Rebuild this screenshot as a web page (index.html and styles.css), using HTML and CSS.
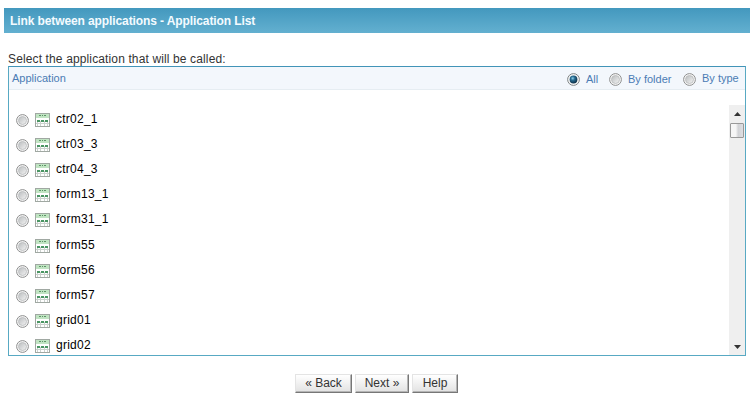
FILE: index.html
```
<!DOCTYPE html>
<html lang="en">
<head>
<meta charset="utf-8">
<title>Link between applications</title>
<link rel="stylesheet" href="styles.css">
</head>
<body>
<svg class="defs" width="0" height="0">
  <defs>
    <linearGradient id="knob" x1="0" y1="0" x2="1" y2="1"><stop offset="0" stop-color="#b9bcbe"/><stop offset="1" stop-color="#f4f4f4"/></linearGradient>
    <radialGradient id="dot" cx=".4" cy=".35" r=".65"><stop offset="0" stop-color="#8fd0ea"/><stop offset=".4" stop-color="#276c92"/><stop offset="1" stop-color="#0d3048"/></radialGradient>
    <linearGradient id="thumb"><stop offset="0" stop-color="#f6f6f6"/><stop offset="1" stop-color="#cfd0d3"/></linearGradient>
    <symbol id="radio" viewBox="0 0 13 13">
      <circle cx="6.5" cy="6.5" r="5.9" fill="#f6f6f6" stroke="#8e8f8f"/>
      <circle cx="6.5" cy="6.5" r="4" fill="url(#knob)" stroke="#b9bbbc" stroke-width=".8"/>
    </symbol>
    <symbol id="radio-on" viewBox="0 0 13 13">
      <circle cx="6.5" cy="6.5" r="5.9" fill="#f6f6f6" stroke="#7f8586"/>
      <circle cx="6.5" cy="6.5" r="3.9" fill="url(#dot)"/>
    </symbol>
    <symbol id="table" viewBox="0 0 15 14">
      <rect x=".5" y=".5" width="14" height="13" fill="#fff" stroke="#a0a8a2"/>
      <path d="M1 1h13v4H1z" fill="#c0e4c2"/>
      <path d="M4 2.500h2M7 2.500h1M9 2.500h2" stroke="#5e9468"/>
      <path d="M1 10.500h13M5.500 8v5M9.500 8v5M2.500 8v5M12.500 8v5" stroke="#ccd2ce"/>
      <path d="M2 7h3v2H2zM6 7h3v2H6zM10 7h3v2h-3z" fill="#4a9663"/>
    </symbol>
  </defs>
</svg>
<header class="title">Link between applications - Application List</header>
<main>
  <p class="prompt">Select the application that will be called:</p>
  <section class="panel">
    <div class="head">
      <span class="caption">Application</span>
      <span class="filter all"><svg class="radio"><use href="#radio-on"/></svg>All</span>
      <span class="filter folder"><svg class="radio"><use href="#radio"/></svg>By folder</span>
      <span class="filter type"><svg class="radio"><use href="#radio"/></svg><span class="raised">By type</span></span>
    </div>
    <div class="body">
      <ul class="list">
        <li><svg class="radio"><use href="#radio"/></svg><svg class="icon"><use href="#table"/></svg><span>ctr02_1</span></li>
        <li><svg class="radio"><use href="#radio"/></svg><svg class="icon"><use href="#table"/></svg><span>ctr03_3</span></li>
        <li><svg class="radio"><use href="#radio"/></svg><svg class="icon"><use href="#table"/></svg><span>ctr04_3</span></li>
        <li><svg class="radio"><use href="#radio"/></svg><svg class="icon"><use href="#table"/></svg><span>form13_1</span></li>
        <li><svg class="radio"><use href="#radio"/></svg><svg class="icon"><use href="#table"/></svg><span>form31_1</span></li>
        <li><svg class="radio"><use href="#radio"/></svg><svg class="icon"><use href="#table"/></svg><span>form55</span></li>
        <li><svg class="radio"><use href="#radio"/></svg><svg class="icon"><use href="#table"/></svg><span>form56</span></li>
        <li><svg class="radio"><use href="#radio"/></svg><svg class="icon"><use href="#table"/></svg><span>form57</span></li>
        <li><svg class="radio"><use href="#radio"/></svg><svg class="icon"><use href="#table"/></svg><span>grid01</span></li>
        <li><svg class="radio"><use href="#radio"/></svg><svg class="icon"><use href="#table"/></svg><span>grid02</span></li>
      </ul>
      <div class="scrollbar">
        <svg class="arrow" viewBox="0 0 7 4"><path d="M0 4 3.500 0 7 4z" fill="#333"/></svg>
        <div class="thumb"></div>
        <svg class="arrow down" viewBox="0 0 7 4"><path d="M0 0h7L3.500 4z" fill="#333"/></svg>
      </div>
    </div>
  </section>
  <div class="buttons">
    <button class="back">« Back</button>
    <button class="next">Next »</button>
    <button class="help">Help</button>
  </div>
</main>
</body>
</html>
```
FILE: styles.css
```
* { box-sizing: border-box; }
body {
  margin: 0;
  padding: 8px 0 0 4px;
  height: 401px;
  overflow: hidden;
  background: #fff;
  font-family: "Liberation Sans", Arial, sans-serif;
}
.defs { display: block; }
.title {
  height: 25px;
  padding-left: 6px;
  background: linear-gradient(#4398be, #63b0d0);
  color: #f4fbff;
  font-size: 12px;
  font-weight: bold;
  letter-spacing: -.1px;
  line-height: 26px;
}
main { padding: 18px 4px 0; }
.prompt {
  margin: 0;
  height: 15px;
  color: #333;
  font-size: 12px;
  letter-spacing: .13px;
  line-height: 16px;
}
.panel {
  width: 738px;
  height: 290px;
  border: 1px solid #58a9c3;
  border-top-color: #4294b8;
}
.head {
  display: flex;
  height: 23px;
  padding-left: 3px;
  border-bottom: 1px solid #e6edf2;
  background: #f3f7fc;
  color: #4b7cb4;
  font-size: 11px;
  line-height: 24px;
}
.caption { width: 555px; line-height: 23px; }
.filter { display: flex; }
.filter .radio { margin: 6px 6px 0 0; }
.all { width: 42px; }
.folder { width: 74px; }
.raised { line-height: 23px; }
.radio { flex: none; width: 13px; height: 13px; }
.body {
  display: flex;
  height: 250px;
  margin-top: 15px;
}
.list {
  flex: 1;
  margin: 0;
  padding: 2.08px 0 0 7px;
  list-style: none;
  overflow: hidden;
}
.list li {
  display: flex;
  height: 25.1px;
  color: #000;
  font-size: 12px;
  letter-spacing: .25px;
  line-height: 24px;
}
.list .radio { margin-top: 7px; }
.icon { flex: none; width: 15px; height: 14px; margin: 6px 6px 0 6px; }
.scrollbar {
  display: flex;
  flex-direction: column;
  align-items: center;
  width: 16px;
  background: #efefef;
}
.arrow { width: 7px; height: 4px; margin-top: 7px; }
.thumb {
  width: 14px;
  height: 15px;
  margin-top: 7px;
  border: 1px solid #999;
  border-radius: 1px;
  background: linear-gradient(90deg, #f6f6f6 40%, #d2d3d6 60%, #dedfe2);
}
.down { margin-top: auto; margin-bottom: 6px; }
.buttons {
  display: flex;
  gap: 3px;
  margin: 18px 0 0 287px;
}
button {
  height: 19px;
  padding: 0;
  border: 1px solid;
  border-color: #e4e4e4 #777 #777 #e4e4e4;
  box-shadow: inset -1px -1px #b5b5b5;
  background: linear-gradient(#fff, #e2e2e2);
  color: #333;
  font: 12px/17px "Liberation Sans", Arial, sans-serif;
}
.back { width: 57px; }
.next { width: 54px; }
.help { width: 46px; }
```
